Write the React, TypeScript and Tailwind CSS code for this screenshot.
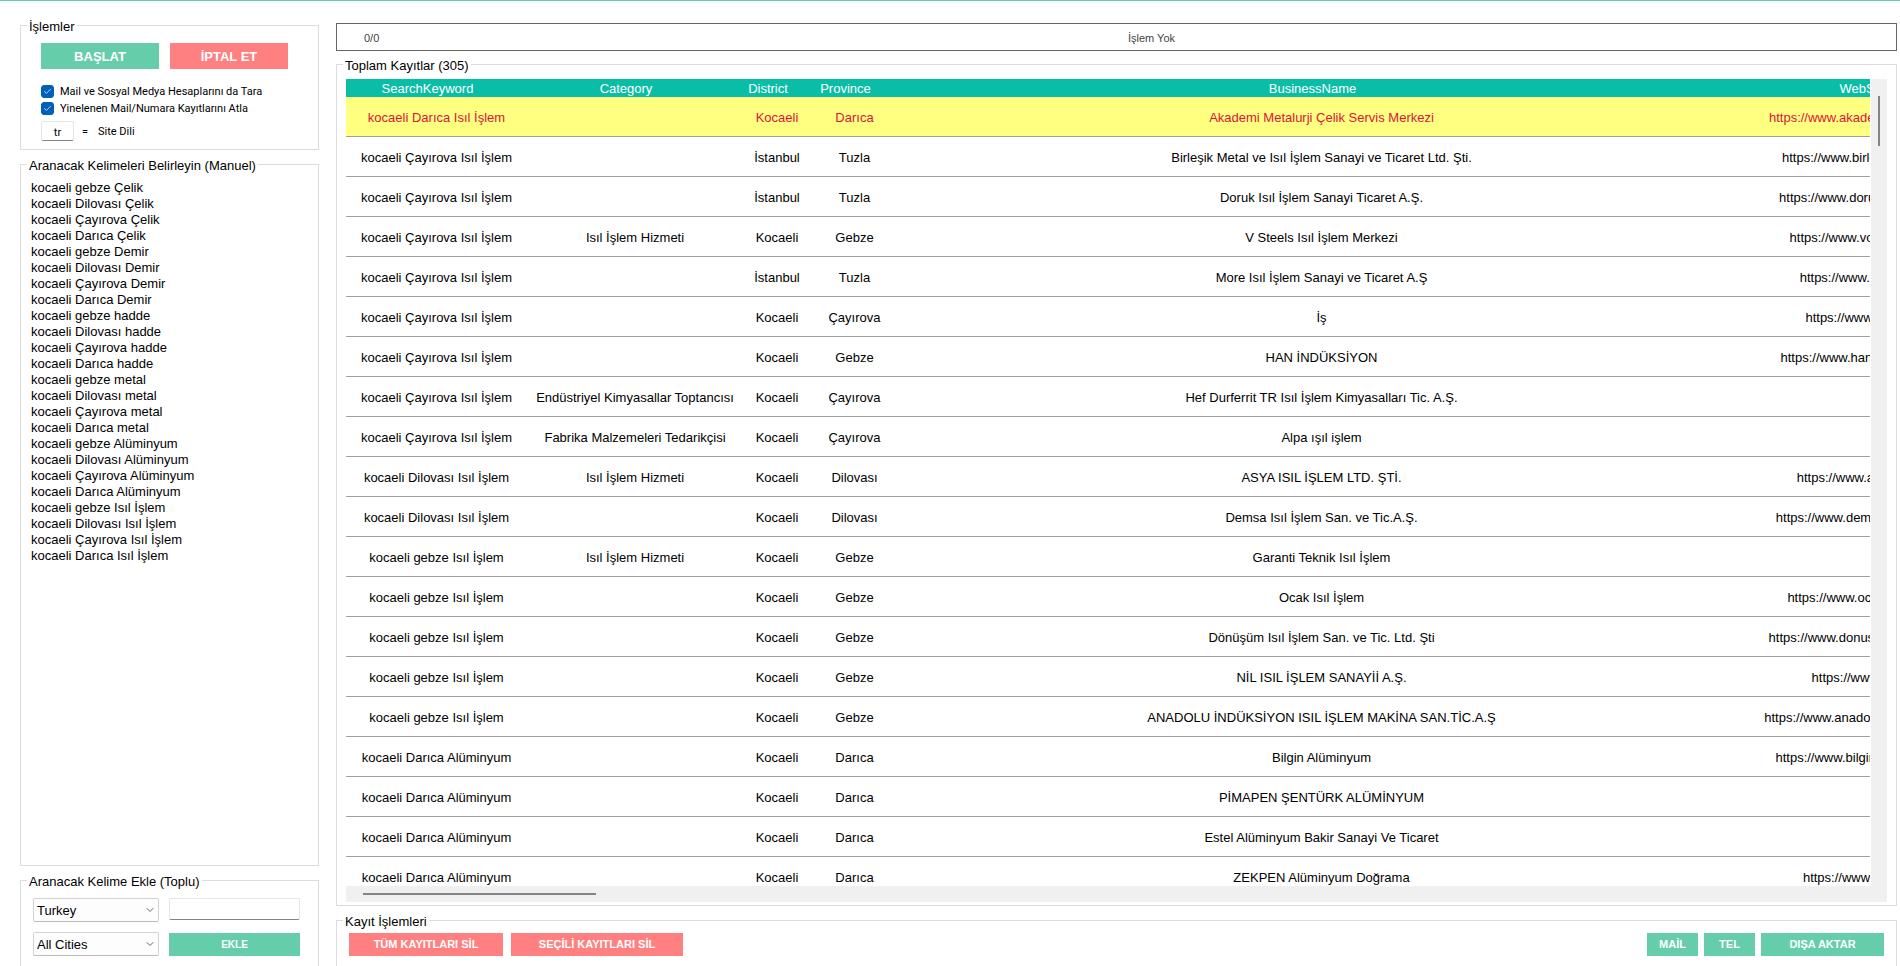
import { useState } from "react";
import type { ReactNode } from "react";
import { Check, ChevronDown } from "lucide-react";
import clsx from "clsx";

const KEYWORDS = [
    "kocaeli gebze Çelik",
    "kocaeli Dilovası Çelik",
    "kocaeli Çayırova Çelik",
    "kocaeli Darıca Çelik",
    "kocaeli gebze Demir",
    "kocaeli Dilovası Demir",
    "kocaeli Çayırova Demir",
    "kocaeli Darıca Demir",
    "kocaeli gebze hadde",
    "kocaeli Dilovası hadde",
    "kocaeli Çayırova hadde",
    "kocaeli Darıca hadde",
    "kocaeli gebze metal",
    "kocaeli Dilovası metal",
    "kocaeli Çayırova metal",
    "kocaeli Darıca metal",
    "kocaeli gebze Alüminyum",
    "kocaeli Dilovası Alüminyum",
    "kocaeli Çayırova Alüminyum",
    "kocaeli Darıca Alüminyum",
    "kocaeli gebze Isıl İşlem",
    "kocaeli Dilovası Isıl İşlem",
    "kocaeli Çayırova Isıl İşlem",
    "kocaeli Darıca Isıl İşlem",
];

// keyword, category, district, province, business, website
const RECORDS: string[][] = [
    ["kocaeli Darıca Isıl İşlem", "", "Kocaeli", "Darıca", "Akademi Metalurji Çelik Servis Merkezi", "https://www.akademimetalurji.com.tr"],
    ["kocaeli Çayırova Isıl İşlem", "", "İstanbul", "Tuzla", "Birleşik Metal ve Isıl İşlem Sanayi ve Ticaret Ltd. Şti.", "https://www.birlesikmetal.com.tr"],
    ["kocaeli Çayırova Isıl İşlem", "", "İstanbul", "Tuzla", "Doruk Isıl İşlem Sanayi Ticaret A.Ş.", "https://www.dorukisilislem.com.tr"],
    ["kocaeli Çayırova Isıl İşlem", "Isıl İşlem Hizmeti", "Kocaeli", "Gebze", "V Steels Isıl İşlem Merkezi", "https://www.volkansteel.com/"],
    ["kocaeli Çayırova Isıl İşlem", "", "İstanbul", "Tuzla", "More Isıl İşlem Sanayi ve Ticaret A.Ş", "https://www.moreisil.com/"],
    ["kocaeli Çayırova Isıl İşlem", "", "Kocaeli", "Çayırova", "İş", "https://www.isisan.com/"],
    ["kocaeli Çayırova Isıl İşlem", "", "Kocaeli", "Gebze", "HAN İNDÜKSİYON", "https://www.haninduksiyon.com/"],
    ["kocaeli Çayırova Isıl İşlem", "Endüstriyel Kimyasallar Toptancısı", "Kocaeli", "Çayırova", "Hef Durferrit TR Isıl İşlem Kimyasalları Tic. A.Ş.", ""],
    ["kocaeli Çayırova Isıl İşlem", "Fabrika Malzemeleri Tedarikçisi", "Kocaeli", "Çayırova", "Alpa ışıl işlem", ""],
    ["kocaeli Dilovası Isıl İşlem", "Isıl İşlem Hizmeti", "Kocaeli", "Dilovası", "ASYA ISIL İŞLEM LTD. ŞTİ.", "https://www.asyaisil.com.tr"],
    ["kocaeli Dilovası Isıl İşlem", "", "Kocaeli", "Dilovası", "Demsa Isıl İşlem San. ve Tic.A.Ş.", "https://www.demsaisilislem.com.tr"],
    ["kocaeli gebze Isıl İşlem", "Isıl İşlem Hizmeti", "Kocaeli", "Gebze", "Garanti Teknik Isıl İşlem", ""],
    ["kocaeli gebze Isıl İşlem", "", "Kocaeli", "Gebze", "Ocak Isıl İşlem", "https://www.ocakisilislem.com"],
    ["kocaeli gebze Isıl İşlem", "", "Kocaeli", "Gebze", "Dönüşüm Isıl İşlem San. ve Tic. Ltd. Şti", "https://www.donusumisilislem.com.tr"],
    ["kocaeli gebze Isıl İşlem", "", "Kocaeli", "Gebze", "NİL ISIL İŞLEM SANAYİİ A.Ş.", "https://www.nil.com.tr"],
    ["kocaeli gebze Isıl İşlem", "", "Kocaeli", "Gebze", "ANADOLU İNDÜKSİYON ISIL İŞLEM MAKİNA SAN.TİC.A.Ş", "https://www.anadoluinduksiyon.com.tr"],
    ["kocaeli Darıca Alüminyum", "", "Kocaeli", "Darıca", "Bilgin Alüminyum", "https://www.bilginaluminyum.com/"],
    ["kocaeli Darıca Alüminyum", "", "Kocaeli", "Darıca", "PİMAPEN ŞENTÜRK ALÜMİNYUM", ""],
    ["kocaeli Darıca Alüminyum", "", "Kocaeli", "Darıca", "Estel Alüminyum Bakir Sanayi Ve Ticaret", ""],
    ["kocaeli Darıca Alüminyum", "", "Kocaeli", "Darıca", "ZEKPEN Alüminyum Doğrama", "https://www.zekpen.com"],
];

const COLUMNS = [
    { name: "SearchKeyword", width: "w-[181px]" },
    { name: "Category", width: "w-[216px]" },
    { name: "District", width: "w-[68px]" },
    { name: "Province", width: "w-[87px]" },
    { name: "BusinessName", width: "w-[847px]" },
    { name: "WebSite", width: "w-[256px]" },
];

interface GroupBoxProps {
    title: string;
    className?: string;
    children: ReactNode;
}

function GroupBox({ title, className, children }: GroupBoxProps) {
    return (
        <fieldset className={clsx("min-w-0 border border-[#dcdcdc]", className)}>
            <legend className="ml-1.5 px-0.5 pt-1 leading-4">{title}</legend>
            {children}
        </fieldset>
    );
}

interface ActionButtonProps {
    tone: "green" | "red";
    className?: string;
    children: ReactNode;
}

function ActionButton({ tone, className, children }: ActionButtonProps) {
    return (
        <button
            type="button"
            className={clsx("font-bold text-white", tone === "green" ? "bg-[#66cdaa]" : "bg-[#ff8080]", className)}
        >
            {children}
        </button>
    );
}

function CheckOption({ id, label }: { id: string; label: string }) {
    const [checked, setChecked] = useState(true);

    return (
        <div className="flex h-[17px] items-center gap-1.5">
            <span className="relative size-[13px]">
                <input
                    id={id}
                    type="checkbox"
                    checked={checked}
                    onChange={(e) => setChecked(e.target.checked)}
                    className="block size-[13px] appearance-none rounded-[3px] border border-[#005fb8] checked:bg-[#005fb8]"
                />
                {checked && <Check className="pointer-events-none absolute top-0.5 left-0.5 size-[9px] text-white" strokeWidth={2} />}
            </span>
            <label htmlFor={id} className="pt-0.5 font-[Roboto,sans-serif] text-[11px]">{label}</label>
        </div>
    );
}

function ComboBox({ label, options }: { label: string; options: string[] }) {
    return (
        <div className="relative">
            <select
                aria-label={label}
                className="block h-6 w-full appearance-none rounded-[2px] border border-[#d2d2d2] border-b-[#bcbcbc] bg-[#fdfdfd] pt-0.5 pl-[3px] text-[13px]"
            >
                {options.map((option) => (
                    <option key={option}>{option}</option>
                ))}
            </select>
            <ChevronDown className="pointer-events-none absolute top-1.5 right-[3px] size-3 text-[#666]" strokeWidth={2} />
        </div>
    );
}

function RecordTable() {
    return (
        <div className="flex min-h-0 flex-1 flex-col bg-[#f0f0f0]">
            <div className="flex min-h-0 flex-1">
                <div className="min-w-0 flex-1 overflow-hidden rounded-br-[2px] bg-white pr-px">
                    <div className="h-full overflow-hidden">
                        <table className="w-[1655px] table-fixed border-separate border-spacing-0 text-center">
                            <thead>
                                <tr className="h-[18px] bg-[#0abda6] text-white">
                                    {COLUMNS.map((column) => (
                                        <th key={column.name} className={clsx("p-0 pt-0.5 pr-[18px] leading-4 font-normal", column.width)}>
                                            {column.name}
                                        </th>
                                    ))}
                                </tr>
                            </thead>
                            <tbody>
                                {RECORDS.map((record, row) => (
                                    <tr key={row} className={clsx("h-10", row === 0 && "bg-[#ffff80] text-[#dc143c]")}>
                                        {record.map((value, col) => (
                                            <td key={col} className="border-b border-[#a0a0a0] p-0 pt-0.5 whitespace-nowrap">
                                                {value}
                                            </td>
                                        ))}
                                    </tr>
                                ))}
                            </tbody>
                        </table>
                    </div>
                </div>
                <div className="w-4 pt-[17px] pl-[7px]">
                    <div className="h-[50px] w-0.5 bg-[#858585]" />
                </div>
            </div>
            <div className="h-4 pt-[7px] pl-[17px]">
                <div className="h-0.5 w-[233px] bg-[#858585]" />
            </div>
        </div>
    );
}

export default function App() {
    return (
        <div className="flex h-screen gap-[17px] overflow-hidden border-t border-[#66cdaa] bg-white pr-[3px] pl-5 font-['Liberation_Sans',Arial,sans-serif] text-[13px] text-black">
            <aside className="flex w-[299px] shrink-0 flex-col gap-1 pt-3.5">
                <GroupBox title="İşlemler">
                    <div className="px-5 pt-2 pb-2">
                        <div className="flex gap-[11px]">
                            <ActionButton tone="green" className="h-[26px] w-[118px] pt-0.5">BAŞLAT</ActionButton>
                            <ActionButton tone="red" className="h-[26px] w-[118px] pt-0.5">İPTAL ET</ActionButton>
                        </div>
                        <div className="mt-3.5">
                            <CheckOption id="scan-social" label="Mail ve Sosyal Medya Hesaplarını da Tara" />
                            <CheckOption id="skip-repeated" label="Yinelenen Mail/Numara Kayıtlarını Atla" />
                        </div>
                        <div className="mt-1 flex items-center font-[Roboto,sans-serif] text-[11px]">
                            <input
                                id="site-lang"
                                defaultValue="tr"
                                className="h-5 w-[33px] rounded-[2px] border border-[#e5e5e5] border-b-[#858585] pt-0.5 text-center"
                            />
                            <span className="ml-2 w-4 pt-0.5">=</span>
                            <label htmlFor="site-lang" className="pt-0.5">Site Dili</label>
                        </div>
                    </div>
                </GroupBox>

                <GroupBox title="Aranacak Kelimeleri Belirleyin (Manuel)" className="flex min-h-0 flex-1 flex-col">
                    <textarea
                        aria-label="Aranacak Kelimeler"
                        defaultValue={KEYWORDS.join("\n")}
                        className="block h-full w-full resize-none pt-1.5 pl-2.5 leading-4 outline-none"
                    />
                </GroupBox>

                <GroupBox title="Aranacak Kelime Ekle (Toplu)" className="border-b-0">
                    <div className="grid grid-cols-[126px_131px] gap-2.5 px-3 pt-2 pb-2.5">
                        <ComboBox label="Ülke" options={["Turkey"]} />
                        <input
                            aria-label="Kelime"
                            className="h-[22px] w-full rounded-[2px] border border-[#e5e5e5] border-b-[#858585] px-1"
                        />
                        <ComboBox label="Şehir" options={["All Cities"]} />
                        <ActionButton tone="green" className="mt-px h-[23px] text-[10px]">EKLE</ActionButton>
                    </div>
                </GroupBox>
            </aside>

            <main className="flex min-w-0 flex-1 flex-col pt-[22px]">
                <div className="flex h-7 items-center border border-[#666] pt-0.5 text-[11px] text-[#444]">
                    <span className="w-[70px] pl-[27px]">0/0</span>
                    <span className="flex-1 text-center">İşlem Yok</span>
                </div>

                <GroupBox title="Toplam Kayıtlar (305)" className="mt-[3px] flex min-h-0 flex-1 flex-col">
                    <div className="flex h-full min-h-0 flex-col px-[9px] pt-[5px] pb-[3px]">
                        <RecordTable />
                    </div>
                </GroupBox>

                <GroupBox title="Kayıt İşlemleri" className="mt-1 border-b-0">
                    <div className="flex justify-between px-3 pt-[3px] pb-2.5 text-[11px]">
                        <div className="flex gap-2">
                            <ActionButton tone="red" className="h-[23px] w-[154px]">TÜM KAYITLARI SİL</ActionButton>
                            <ActionButton tone="red" className="h-[23px] w-[172px]">SEÇİLİ KAYITLARI SİL</ActionButton>
                        </div>
                        <div className="flex gap-1.5">
                            <ActionButton tone="green" className="h-[23px] w-[51px]">MAİL</ActionButton>
                            <ActionButton tone="green" className="h-[23px] w-[51px]">TEL</ActionButton>
                            <ActionButton tone="green" className="h-[23px] w-[123px]">DIŞA AKTAR</ActionButton>
                        </div>
                    </div>
                </GroupBox>
            </main>
        </div>
    );
}
